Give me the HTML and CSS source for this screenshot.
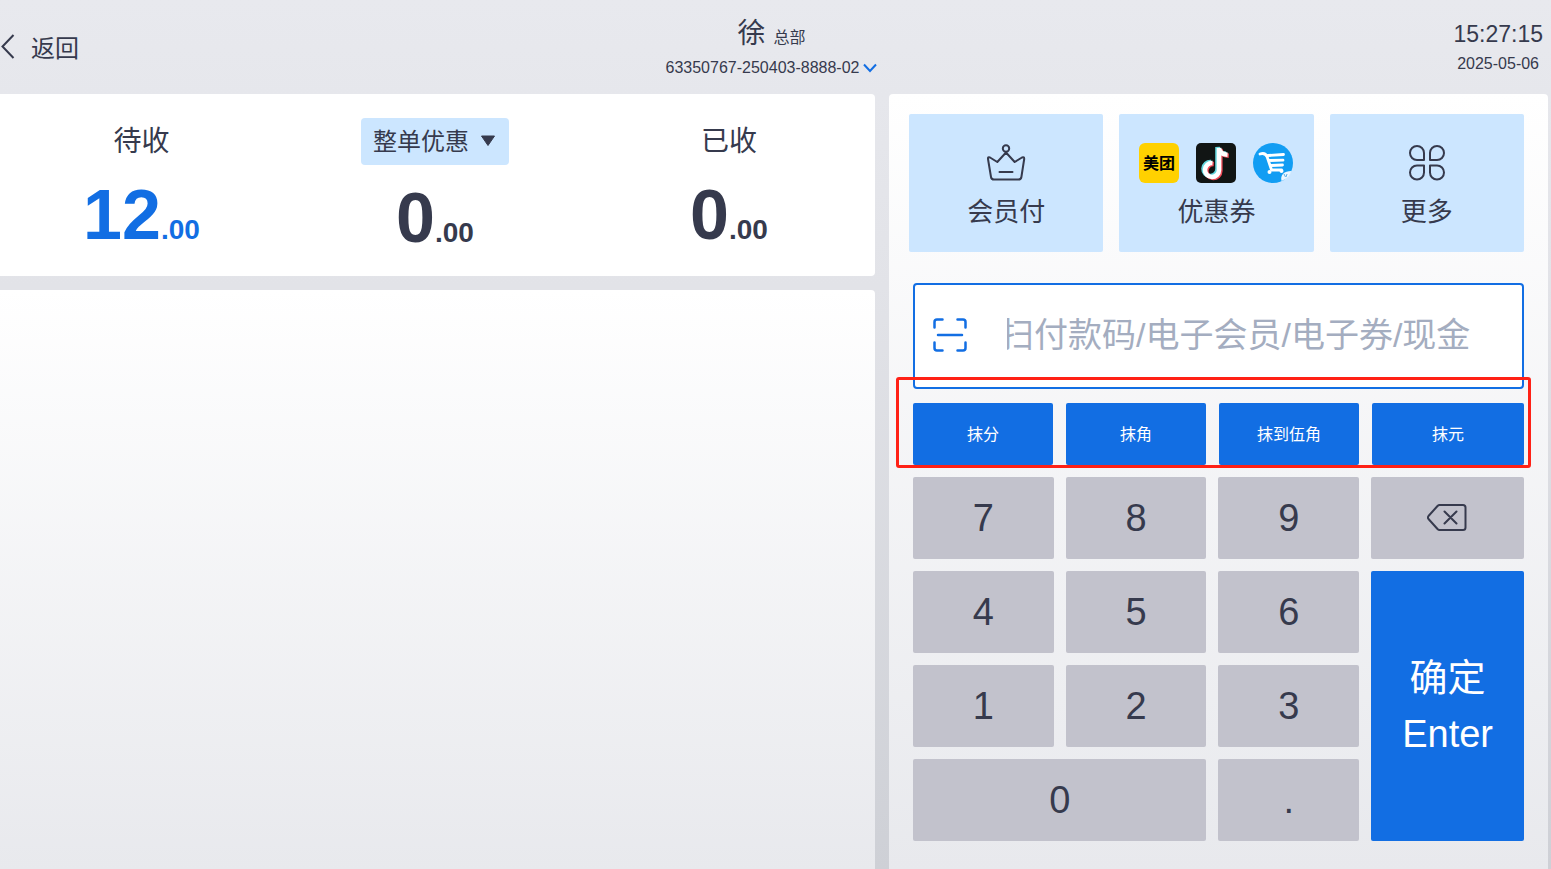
FILE: index.html
```html
<!DOCTYPE html>
<html lang="zh-CN">
  <head>
    <meta charset="UTF-8" />
    <meta name="viewport" content="width=device-width, initial-scale=1.0" />
    <title>收银</title>
    <link rel="stylesheet" href="styles.css">
  </head>
  <body>
    <header class="topbar">
      <button class="back" type="button">
        <svg width="16" height="26" viewBox="0 0 16 26"><path d="M13.5 2 2.5 13.5 13.5 25" /></svg>
        返回
      </button>
      <div class="shop">
        <h1 class="shop-name">徐 <small>总部</small></h1>
        <button class="order-no" type="button">
          63350767-250403-8888-02
          <svg width="14" height="10" viewBox="0 0 14 10"><path d="M1 1.5 7 8 13 1.5" /></svg>
        </button>
      </div>
      <div class="clock">
        <time class="clock-time">15:27:15</time>
        <time class="clock-date">2025-05-06</time>
      </div>
    </header>

    <main class="cashier">
      <div class="left">
        <section class="summary">
          <div class="summary-item">
            <h2>待收</h2>
            <p class="amount due">12<small>.00</small></p>
          </div>
          <div class="summary-item">
            <div class="discount">
              <select aria-label="整单优惠">
                <option>整单优惠</option>
              </select>
              <svg width="16" height="12" viewBox="0 0 16 12"><path d="M1.5 1h13L8 10.500z" /></svg>
            </div>
            <p class="amount">0<small>.00</small></p>
          </div>
          <div class="summary-item">
            <h2>已收</h2>
            <p class="amount">0<small>.00</small></p>
          </div>
        </section>
        <section class="records"></section>
      </div>

      <section class="pay">
        <div class="methods">
          <button class="method" type="button">
            <span class="icons">
              <svg class="line-icon" width="40" height="40" viewBox="0 0 40 40">
                <circle cx="20" cy="5.500" r="3.200" />
                <path d="M20 9.500 28.700 19 36 14.500Q38.400 13.500 38.200 16L35.400 34Q35 36.500 32.400 36.500H8Q5.400 36.500 5 34L2 16Q1.700 13.500 4 14.500L11.300 19Z" />
                <path d="M13.500 29h13" />
              </svg>
            </span>
            会员付
          </button>
          <button class="method" type="button">
            <span class="icons">
              <svg width="40" height="40" viewBox="0 0 40 40">
                <rect width="40" height="40" rx="6" fill="#ffd100" />
                <text class="meituan" x="20" y="26" text-anchor="middle">美团</text>
              </svg>
              <svg width="40" height="40" viewBox="0 0 40 40">
                <rect width="40" height="40" rx="5" fill="#111514" />
                <g fill="none" stroke-width="4.600">
                  <path d="M16.500 19.500A7 7 0 1 0 23 26.500V4.500c.6 4.500 4 6.500 8.500 6.800" stroke="#62d5dc" transform="translate(-1.500 -.5)" />
                  <path d="M16.500 19.500A7 7 0 1 0 23 26.500V4.500c.6 4.500 4 6.500 8.500 6.800" stroke="#f04b58" transform="translate(1.300 1.500)" />
                  <path d="M16.500 19.500A7 7 0 1 0 23 26.500V4.500c.6 4.500 4 6.500 8.500 6.800" stroke="#fff" transform="translate(0 .5)" />
                </g>
              </svg>
              <svg width="40" height="40" viewBox="0 0 40 40">
                <circle cx="20" cy="20" r="20" fill="#129df3" />
                <path d="M7 11c4-1.500 6 0 7.200 3l4.200 12.500M15 12.500 30.500 11.500M16.500 17.500 30 17.200M18 22.500 29.500 22M18.500 27H28.500" fill="none" stroke="#fff" stroke-width="2.800" stroke-linecap="round" />
                <circle cx="16.500" cy="29" r="2" fill="#fff" />
                <circle cx="28.500" cy="28" r="2" fill="#fff" />
                <path d="M28.500 38C27 32 31 28 38.500 28Q36.500 35 28.500 38z" fill="#eef7ff" />
                <path d="m31 31 1.500 3M34 31l-1 3" stroke="#5aaee8" />
              </svg>
            </span>
            优惠券
          </button>
          <button class="method" type="button">
            <span class="icons">
              <svg class="line-icon" width="40" height="40" viewBox="0 0 40 40">
                <path d="M17 17H10A7 7 0 1 1 17 10ZM23 17V10A7 7 0 1 1 30 17ZM17 22.500V29.500A7 7 0 1 1 10 22.500ZM23 22.500H30A7 7 0 1 1 23 29.500Z" />
              </svg>
            </span>
            更多
          </button>
        </div>

        <div class="entry">
          <label class="scan">
            <svg width="34" height="34" viewBox="0 0 34 34">
              <path d="M1.500 9.500V4Q1.500 1.500 4 1.500H9.500M24.500 1.500H30Q32.500 1.500 32.500 4V9.500M32.500 24.500V30Q32.500 32.500 30 32.500H24.500M9.500 32.500H4Q1.500 32.500 1.500 30V24.500M5 17H29" />
            </svg>
            <input type="text" aria-label="付款码" placeholder="扫付款码/电子会员/电子券/现金" />
          </label>

          <div class="rounding">
            <button type="button">抹分</button>
            <button type="button">抹角</button>
            <button type="button">抹到伍角</button>
            <button type="button">抹元</button>
          </div>

          <div class="keypad">
            <button type="button">7</button>
            <button type="button">8</button>
            <button type="button">9</button>
            <button type="button" aria-label="退格">
              <svg class="line-icon" width="42" height="30" viewBox="0 0 42 30">
                <path d="M12.500 2H36Q38.500 2 38.500 4.500V24.500Q38.500 27 36 27H12.500Q11.500 27 10.500 26L1.500 16Q.3 14.500 1.500 13L10.500 3Q11.500 2 12.500 2ZM17.500 8.500 29.500 20.500M29.500 8.500 17.500 20.500" />
              </svg>
            </button>
            <button type="button">4</button>
            <button type="button">5</button>
            <button type="button">6</button>
            <button class="enter" type="button">确定<br />Enter</button>
            <button type="button">1</button>
            <button type="button">2</button>
            <button type="button">3</button>
            <button class="zero" type="button">0</button>
            <button type="button">.</button>
          </div>
        </div>
      </section>
    </main>
  </body>
</html>
```
FILE: styles.css
```css
* {
  box-sizing: border-box;
}

body {
  margin: 0;
  min-height: 100vh;
  display: flex;
  flex-direction: column;
  color: #363a4d;
  background: linear-gradient(#e8e9ee, #e2e3e8 33%, #ced0d6);
  font-family: "Liberation Sans", "Noto Sans CJK SC", sans-serif;
}

h1,
h2,
p {
  margin: 0;
  font-weight: normal;
}

small {
  line-height: 1;
}

button,
input,
select {
  margin: 0;
  padding: 0;
  border: 0;
  color: inherit;
  background: none;
  font-family: inherit;
}

svg {
  flex: none;
}

.line-icon {
  fill: none;
  stroke: currentColor;
  stroke-width: 2;
  stroke-linecap: round;
  stroke-linejoin: round;
}

/* header */
.topbar {
  display: grid;
  grid-template-columns: 1fr auto 1fr;
  height: 94px;
  padding-right: 8px;
}

.back {
  display: flex;
  align-items: center;
  justify-self: start;
  gap: 15px;
  padding-bottom: 2px;
  font-size: 24px;
}

.back svg {
  fill: none;
  stroke: currentColor;
  stroke-width: 2;
}

.shop {
  display: flex;
  flex-direction: column;
  align-items: center;
  padding-top: 13px;
}

.shop-name {
  font-size: 28px;
  line-height: 42px;
}

.shop-name small {
  font-size: 16px;
}

.order-no {
  display: flex;
  align-items: center;
  gap: 4px;
  font-size: 16px;
  line-height: 26px;
}

.order-no svg {
  fill: none;
  stroke: #126ee3;
  stroke-width: 2;
}

.clock {
  display: flex;
  flex-direction: column;
  align-items: flex-end;
  padding-top: 18px;
}

.clock-time {
  font-size: 23px;
  line-height: 32px;
}

.clock-date {
  padding-right: 4px;
  font-size: 16px;
  line-height: 28px;
}

/* columns */
.cashier {
  flex: 1;
  display: grid;
  grid-template-columns: 875fr 659fr;
  gap: 14px;
  padding-right: 3px;
}

.left {
  display: flex;
  flex-direction: column;
  gap: 14px;
}

.summary {
  display: grid;
  grid-template-columns: 283fr 304fr 284fr;
  padding: 24px 4px 18px 0;
  background: #fff;
  border-radius: 0 4px 4px 0;
}

.summary-item {
  display: flex;
  flex-direction: column;
  align-items: center;
  gap: 10px;
}

.summary-item h2 {
  font-size: 28px;
  line-height: 47px;
}

.amount {
  font-size: 70px;
  font-weight: bold;
  line-height: 80px;
}

.amount small {
  font-size: 28px;
}

.due {
  color: #126ee3;
}

.discount {
  position: relative;
  margin-bottom: 3px;
}

.discount select {
  display: block;
  appearance: none;
  width: 148px;
  height: 47px;
  padding-left: 12px;
  border-radius: 4px;
  background: #cce6ff;
  font-size: 24px;
}

.discount svg {
  position: absolute;
  top: 17px;
  right: 13px;
  fill: currentColor;
  stroke: currentColor;
  stroke-linejoin: round;
  pointer-events: none;
}

.records {
  flex: 1;
  border-radius: 0 4px 0 0;
  background: linear-gradient(#fff, #e8e9ed);
}

/* payment */
.pay {
  padding: 20px 24px 28px 20px;
  border-radius: 4px 4px 0 0;
  background: linear-gradient(#fff, #e8e9ed);
}

.methods {
  display: grid;
  grid-template-columns: repeat(3, 1fr);
  gap: 16px;
}

.method {
  display: flex;
  flex-direction: column;
  align-items: center;
  gap: 11px;
  padding: 29px 0 22px;
  border-radius: 2px;
  background: #cce6ff;
  font-size: 26px;
  line-height: 36px;
}

.icons {
  display: flex;
  gap: 17px;
}

.meituan {
  font-size: 16px;
  font-weight: bold;
}

.entry {
  display: flex;
  flex-direction: column;
  margin: 31px 0 0 4px;
}

.scan {
  display: flex;
  align-items: center;
  gap: 40px;
  height: 106px;
  padding: 0 50px 2px 18px;
  border: 2px solid #126ee3;
  border-radius: 4px;
  background: #fff;
}

.scan svg {
  fill: none;
  stroke: #126ee3;
  stroke-width: 2.5;
  stroke-linecap: round;
}

.scan input {
  flex: 1;
  min-width: 0;
  height: 60px;
  outline: 0;
  font-size: 34px;
  text-indent: -7px;
}

.scan input::placeholder {
  color: #a4adc0;
}

.rounding,
.keypad {
  display: grid;
  grid-template-columns: 140fr 140fr 140fr 152fr;
  gap: 12px;
}

.rounding {
  position: relative;
  column-gap: 13px;
  margin: 14px 0 12px;
}

.rounding button {
  height: 62px;
  padding-bottom: 2px;
  border-radius: 2px;
  color: #fff;
  background: #126ee3;
  font-size: 16px;
}

/* red frame around the rounding buttons */
.rounding::after {
  content: "";
  position: absolute;
  inset: -26px -7px -3px -17px;
  border: 3px solid #ff2116;
  border-radius: 3px;
  pointer-events: none;
}

.keypad {
  grid-auto-rows: 82px;
}

.keypad button {
  display: flex;
  align-items: center;
  justify-content: center;
  border-radius: 2px;
  background: #c2c2cc;
  font-size: 38px;
}

.keypad .enter {
  grid-area: 2 / 4 / 5 / 5;
  display: block;
  color: #fff;
  background: #126ee3;
  line-height: 56px;
}

.keypad .zero {
  grid-column: span 2;
}
```
